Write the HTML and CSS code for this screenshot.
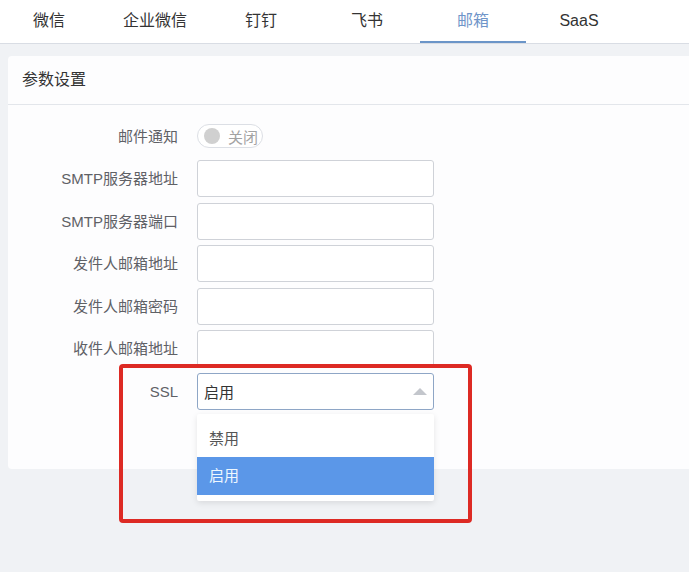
FILE: index.html
```html
<!DOCTYPE html>
<html lang="zh-CN">
<head>
<meta charset="utf-8">
<title>邮箱 参数设置</title>
<link rel="stylesheet" href="styles.css">
</head>
<body>
<div class="page">
  <nav class="tabs">
    <div class="tab-list">
      <div class="tab">微信</div>
      <div class="tab">企业微信</div>
      <div class="tab">钉钉</div>
      <div class="tab">飞书</div>
      <div class="tab active">邮箱</div>
      <div class="tab">SaaS</div>
    </div>
  </nav>
  <main class="content">
    <section class="card">
      <header class="card-header">参数设置</header>
      <div class="form">
        <div class="row">
          <label class="label">邮件通知</label>
          <div class="field">
            <span class="switch"><span class="knob"></span><span class="switch-text">关闭</span></span>
          </div>
        </div>
        <div class="row">
          <label class="label">SMTP服务器地址</label>
          <div class="field"><div class="input"></div></div>
        </div>
        <div class="row">
          <label class="label">SMTP服务器端口</label>
          <div class="field"><div class="input"></div></div>
        </div>
        <div class="row">
          <label class="label">发件人邮箱地址</label>
          <div class="field"><div class="input"></div></div>
        </div>
        <div class="row">
          <label class="label">发件人邮箱密码</label>
          <div class="field"><div class="input"></div></div>
        </div>
        <div class="row">
          <label class="label">收件人邮箱地址</label>
          <div class="field"><div class="input"></div></div>
        </div>
        <div class="row last">
          <label class="label">SSL</label>
          <div class="field">
            <div class="select">
              <span class="select-value">启用</span>
              <span class="caret"></span>
              <ul class="dropdown">
                <li class="option">禁用</li>
                <li class="option selected">启用</li>
              </ul>
            </div>
          </div>
        </div>
      </div>
    </section>
  </main>
  <div class="highlight-box"></div>
</div>
</body>
</html>
```

FILE: styles.css
```css
html, body {
  margin: 0;
  padding: 0;
  overflow: hidden;
}
body {
  background: #f0f2f5;
  font-family: "Liberation Sans", "Noto Sans CJK SC", sans-serif;
  color: #333;
}
.page {
  position: relative;
  width: 689px;
  height: 572px;
  overflow: hidden;
}
.tabs {
  background: #fff;
  height: 43px;
  border-bottom: 1px solid #d9dde4;
}
.tab-list {
  display: flex;
  margin-left: -4px;
}
.tab {
  width: 106px;
  height: 43px;
  box-sizing: border-box;
  text-align: center;
  line-height: 41px;
  font-size: 16px;
  color: #333;
  border-bottom: 2px solid transparent;
}
.tab.active {
  color: #6f95c9;
  border-bottom-color: #6b95c8;
}
.content {
  padding-top: 12px;
}
.card {
  margin-left: 8px;
  margin-right: -20px;
  background: #fdfdfe;
  border-radius: 4px;
}
.card-header {
  height: 48px;
  line-height: 48px;
  padding-left: 14px;
  font-size: 16px;
  color: #333;
  border-bottom: 1px solid #e3e6eb;
}
.form {
  padding: 12.5px 0 59px;
}
.row {
  display: flex;
  height: 37px;
  margin-bottom: 5.5px;
}
.row.last {
  margin-bottom: 0;
}
.label {
  width: 170px;
  margin-right: 19px;
  text-align: right;
  line-height: 37px;
  font-size: 15px;
  color: #5f6166;
}
.field {
  width: 237px;
  display: flex;
  align-items: center;
}
.input {
  width: 100%;
  height: 37px;
  box-sizing: border-box;
  border: 1px solid #cfd2d8;
  border-radius: 3px;
  background: #fff;
}
.switch {
  display: inline-flex;
  align-items: center;
  box-sizing: border-box;
  width: 66px;
  height: 24px;
  padding-left: 6px;
  border: 1px solid #dcdfe5;
  border-radius: 12px;
  background: #fff;
}
.knob {
  width: 16px;
  height: 16px;
  border-radius: 50%;
  background: #d0d0d0;
}
.switch-text {
  margin-left: 8px;
  font-size: 15px;
  color: #a3a3a3;
}
.select {
  position: relative;
  width: 100%;
  height: 37px;
  box-sizing: border-box;
  border: 1px solid #8ea6c6;
  border-radius: 3px;
  background: #fff;
  display: flex;
  align-items: center;
  padding-left: 6px;
}
.select-value {
  flex: 1;
  font-size: 15px;
  color: #333;
}
.caret {
  width: 0;
  height: 0;
  margin-right: 6px;
  border-left: 7px solid transparent;
  border-right: 7px solid transparent;
  border-bottom: 7px solid #c3c6cc;
}
.dropdown {
  position: absolute;
  z-index: 5;
  top: 40px;
  left: -1px;
  width: 237px;
  margin: 0;
  padding: 6px 0 6.5px;
  list-style: none;
  background: #fff;
  box-shadow: 0 2px 6px rgba(0, 0, 0, 0.1);
  border-radius: 2px;
}
.option {
  height: 37.5px;
  line-height: 37.5px;
  padding-left: 12px;
  font-size: 15px;
  color: #555;
}
.option.selected {
  background: #5b97e8;
  color: #eef7ff;
}
.highlight-box {
  position: absolute;
  left: 119px;
  top: 364px;
  width: 353px;
  height: 159px;
  box-sizing: border-box;
  border: 4px solid #dd2a24;
  border-radius: 4px;
  z-index: 10;
}
```
